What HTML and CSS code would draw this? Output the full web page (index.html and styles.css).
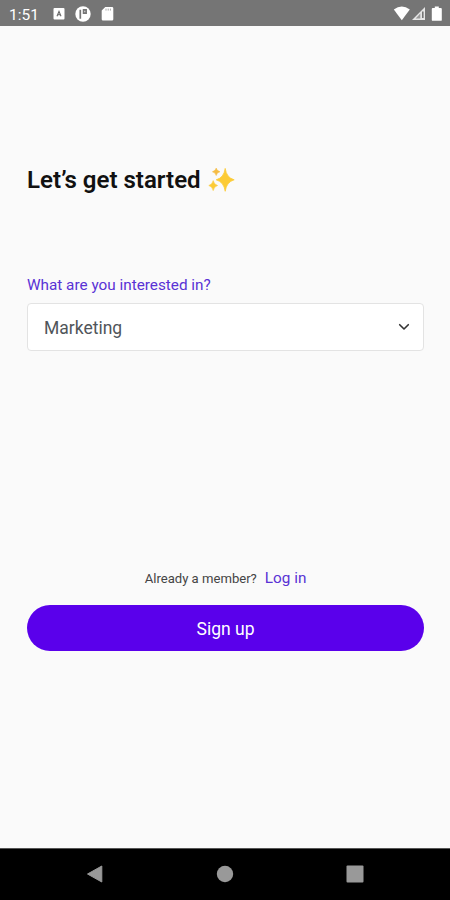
FILE: index.html
```html
<!DOCTYPE html>
<html lang="en">

<head>
    <meta charset="UTF-8">
    <title>Sign up</title>
    <link rel="stylesheet" href="styles.css">
</head>

<body>
    <div class="screen">
        <div class="status">
            <span class="time">1:51</span>
            <svg class="notices" width="64" height="26" viewBox="0 0 64 26">
                <rect x="2.5" y="8" width="11" height="11.5" rx="1" fill="#fff"/>
                <path d="M6 16.2L8 11.4l2 4.8M6.6 14.8h2.8" fill="none" stroke="#666" stroke-width="1.1"/>
                <circle cx="32" cy="14" r="7.7" fill="#fff"/>
                <path d="M29.3 18.7V9.7M32.6 9.9h2.5v3.2h-2.5z" fill="none" stroke="#757575" stroke-width="1.7"/>
                <path d="M54.3 7H61a1.3 1.3 0 0 1 1.3 1.3v10.9a1.3 1.3 0 0 1-1.3 1.3h-9a1.3 1.3 0 0 1-1.3-1.3v-8.6z" fill="#fff"/>
                <path d="M55 8.6v2M57.2 8.6v2M59.4 8.6v2" stroke="#aaa"/>
            </svg>
            <svg class="signals" width="52" height="26" viewBox="0 0 52 26">
                <path d="M.8 9.5Q8.8 3.6 16.8 9.5L8.8 20.2z" fill="#fff"/>
                <path d="M32 7v13H19z" fill="#e6e6e6"/>
                <path d="M27.3 13.6v4.8h-4.6z" fill="#999"/>
                <path d="M29.8 11.5v6.5" stroke="#757575" stroke-width="1.6"/>
                <path d="M41.8 6.5h4V8h2.1q.9 0 .9.9v11q0 .9-.9.9h-8.2q-.9 0-.9-.9v-11q0-.9.9-.9h2.1z" fill="#fff"/>
            </svg>
        </div>
        <div class="content">
            <h1 class="title">
                <span>Let’s get started</span>
                <svg width="28" height="28" viewBox="0 0 28 28">
                    <path d="M17.2 2.4Q18.5 11.7 26.2 13.8Q18.5 16 17.2 25.3Q15.9 16 8.2 13.8Q15.9 11.7 17.2 2.4z" fill="#fccb35" stroke="#fccb35" stroke-width=".8" stroke-linejoin="round"/>
                    <path d="M8.2 2Q8.8 5 12 5.8Q8.8 6.6 8.2 9.6Q7.6 6.6 4.4 5.8Q7.6 5 8.2 2z" fill="#f5bc45" stroke="#f5bc45" stroke-width=".5"/>
                    <path d="M5.2 14.6Q6 18.5 9.6 19.5Q6 20.5 5.2 24.6Q4.4 20.5.8 19.5Q4.4 18.5 5.2 14.6z" fill="#fccb35" stroke="#fccb35" stroke-width=".6"/>
                </svg>
            </h1>
            <div class="label">What are you interested in?</div>
            <div class="select">
                <span class="value">Marketing</span>
                <svg width="12" height="8" viewBox="0 0 12 8">
                    <path d="M1.7 1.7L6 6l4.3-4.3" fill="none" stroke="#333" stroke-width="1.6" stroke-linecap="round" stroke-linejoin="round"/>
                </svg>
            </div>
            <div class="member">
                <span class="ask">Already a member?</span>
                <a class="login" href="#">Log in</a>
            </div>
            <button class="signup">Sign up</button>
        </div>
        <div class="nav">
            <svg width="18" height="20" viewBox="0 0 18 20">
                <path d="M1.5 10L15.8 2v16z" fill="#999" stroke="#999" stroke-linejoin="round"/>
            </svg>
            <svg width="18" height="20" viewBox="0 0 18 20">
                <circle cx="9" cy="10" r="8.2" fill="#999"/>
            </svg>
            <svg width="18" height="20" viewBox="0 0 18 20">
                <rect x=".5" y="1.5" width="17" height="17" rx="1" fill="#999"/>
            </svg>
        </div>
    </div>
</body>

</html>
```
FILE: styles.css
```css
* {
    margin: 0;
    padding: 0;
    box-sizing: border-box;
}

body {
    background-color: #fafafa;
    font-family: Roboto, sans-serif;
}

svg {
    display: block;
    flex-shrink: 0;
}

.screen {
    width: 450px;
    height: 900px;
    display: flex;
    flex-direction: column;
    overflow: hidden;
}

.status {
    height: 26px;
    display: flex;
    align-items: center;
    background-color: #757575;
    color: #fff;
}

.time {
    width: 51px;
    padding: 3px 0 0 9px;
    font-size: 15.5px;
    line-height: 20px;
}

.signals {
    margin-left: auto;
    margin-right: 5px;
}

.content {
    flex: 1;
    display: flex;
    flex-direction: column;
    padding: 140px 26px 0 27px;
}

.title {
    height: 28px;
    display: flex;
    align-items: center;
    gap: 7px;
    font-size: 24.05px;
    font-weight: 600;
    line-height: 28px;
    color: #111;
}

.label {
    margin-top: 81px;
    font-size: 15.3px;
    line-height: 20px;
    color: #5932d5;
}

.select {
    height: 48px;
    margin-top: 8px;
    padding: 2px 13px 0 16px;
    display: flex;
    align-items: center;
    justify-content: space-between;
    border: 1px solid #e3e3e3;
    border-radius: 4px;
    background-color: #fff;
}

.select svg {
    margin-bottom: 2px;
}

.value {
    font-size: 17.5px;
    line-height: 24px;
    color: #50555a;
}

.member {
    height: 20px;
    margin-top: 217px;
    display: flex;
    justify-content: center;
    align-items: baseline;
    gap: 8px;
    line-height: 20px;
}

.ask {
    font-size: 13.1px;
    color: #444;
}

.login {
    font-size: 15.3px;
    text-decoration: none;
    color: #5932d5;
}

.signup {
    height: 46px;
    margin-top: 17px;
    padding-top: 2px;
    border: none;
    border-radius: 23px;
    background-color: #5a00eb;
    color: #fff;
    font-family: inherit;
    font-size: 17.5px;
    line-height: 24px;
}

.nav {
    height: 52px;
    padding-bottom: 2px;
    display: flex;
    justify-content: center;
    align-items: center;
    gap: 112px;
    border-top: 1px solid #555;
    background-color: #000;
}
```
